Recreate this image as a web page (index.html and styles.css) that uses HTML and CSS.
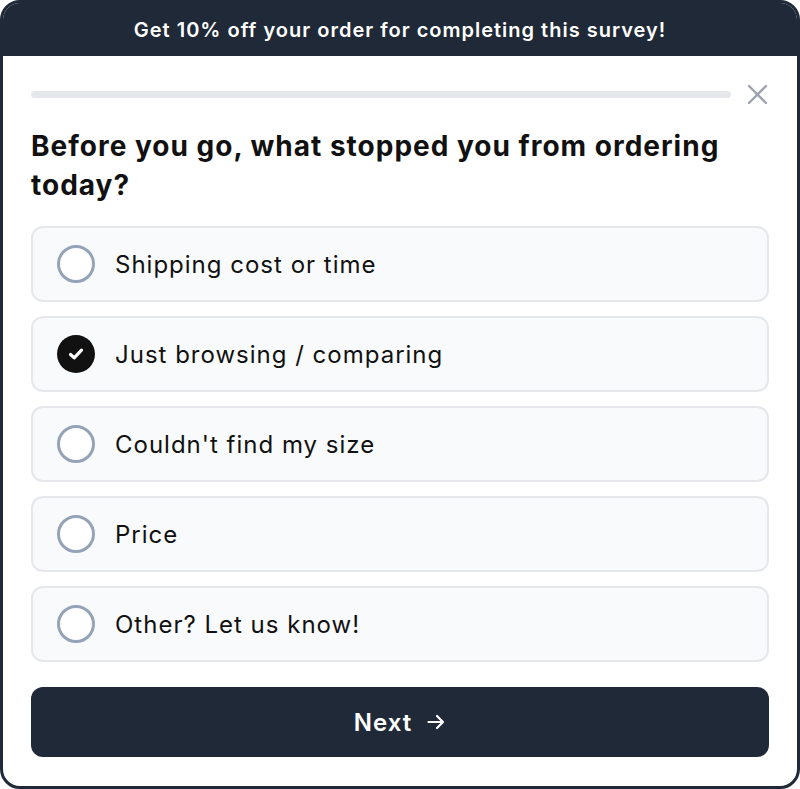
FILE: index.html
```html
<!DOCTYPE html>
<html>
<head>
<meta charset="utf-8">
<link rel="stylesheet" href="styles.css">
</head>
<body>
<div class="card">
  <div class="banner">Get 10% off your order for completing this survey!</div>
  <div class="content">
    <div class="top-row">
      <div class="progress"></div>
      <button class="close" aria-label="Close">
        <svg width="22" height="22" viewBox="0 0 22 22" fill="none" stroke="#9ca3af" stroke-width="2.4" stroke-linecap="round"><path d="M3 3L20 20M20 3L3 20"/></svg>
      </button>
    </div>
    <h1 class="question">Before you go, what stopped you from ordering today?</h1>
    <div class="options">
      <div class="option"><span class="radio"></span><span class="label">Shipping cost or time</span></div>
      <div class="option"><span class="radio checked"><svg width="22" height="22" viewBox="0 0 22 22" fill="none" stroke="#fff" stroke-width="3.2" stroke-linecap="round" stroke-linejoin="round"><path d="M5.5 11.5L9.2 14.8L16.5 7.2"/></svg></span><span class="label">Just browsing / comparing</span></div>
      <div class="option"><span class="radio"></span><span class="label">Couldn't find my size</span></div>
      <div class="option"><span class="radio"></span><span class="label">Price</span></div>
      <div class="option"><span class="radio"></span><span class="label">Other? Let us know!</span></div>
    </div>
    <button class="next">Next <svg width="20" height="20" viewBox="0 0 20 20" fill="none" stroke="#fff" stroke-width="2.2" stroke-linecap="round" stroke-linejoin="round"><path d="M2.5 10H17M11 4L17 10L11 16"/></svg></button>
  </div>
</div>
</body>
</html>
```
FILE: styles.css
```css
* { box-sizing: border-box; }
html, body { margin: 0; padding: 0; background: #fff; }
body { font-family: Inter, "Noto Sans", sans-serif; }
.card {
  width: 800px;
  height: 789px;
  border: 3px solid #1f2937;
  border-radius: 20px;
  overflow: hidden;
  background: #fff;
  display: flex;
  flex-direction: column;
}
.banner {
  background: #1f2937;
  color: #fff;
  height: 53px;
  display: flex;
  align-items: center;
  justify-content: center;
  font-size: 20px;
  font-weight: 600;
  letter-spacing: 1px;
}
.content {
  padding: 26px 28px 29px;
  display: flex;
  flex-direction: column;
}
.top-row {
  display: flex;
  align-items: center;
  gap: 14px;
  height: 24px;
}
.progress {
  flex: 1;
  height: 7px;
  border-radius: 4px;
  background: #e5e7eb;
}
.close {
  border: none;
  background: none;
  padding: 0;
  width: 24px;
  height: 24px;
  display: flex;
  align-items: center;
  justify-content: center;
}
.question {
  margin: 21px 0 21px;
  font-size: 28px;
  line-height: 39px;
  font-weight: 700;
  color: #111111;
  letter-spacing: 1px;
}
.options {
  display: flex;
  flex-direction: column;
  gap: 14px;
}
.option {
  height: 76px;
  border: 2px solid #e5e7eb;
  background: #f9fafb;
  border-radius: 12px;
  display: flex;
  align-items: center;
  padding-left: 24px;
  gap: 20px;
}
.radio {
  width: 38px;
  height: 38px;
  border-radius: 50%;
  border: 3px solid #94a3b8;
  background: #fff;
  flex: none;
  display: flex;
  align-items: center;
  justify-content: center;
}
.radio.checked {
  border: none;
  background: #111111;
}
.label {
  font-size: 24px;
  color: #111111;
  letter-spacing: 1px;
}
.next {
  margin-top: 25px;
  height: 70px;
  border: none;
  border-radius: 12px;
  background: #1f2937;
  color: #fff;
  font-family: inherit;
  font-size: 24px;
  font-weight: 600;
  letter-spacing: 1px;
  display: flex;
  align-items: center;
  justify-content: center;
  gap: 14px;
}
```
